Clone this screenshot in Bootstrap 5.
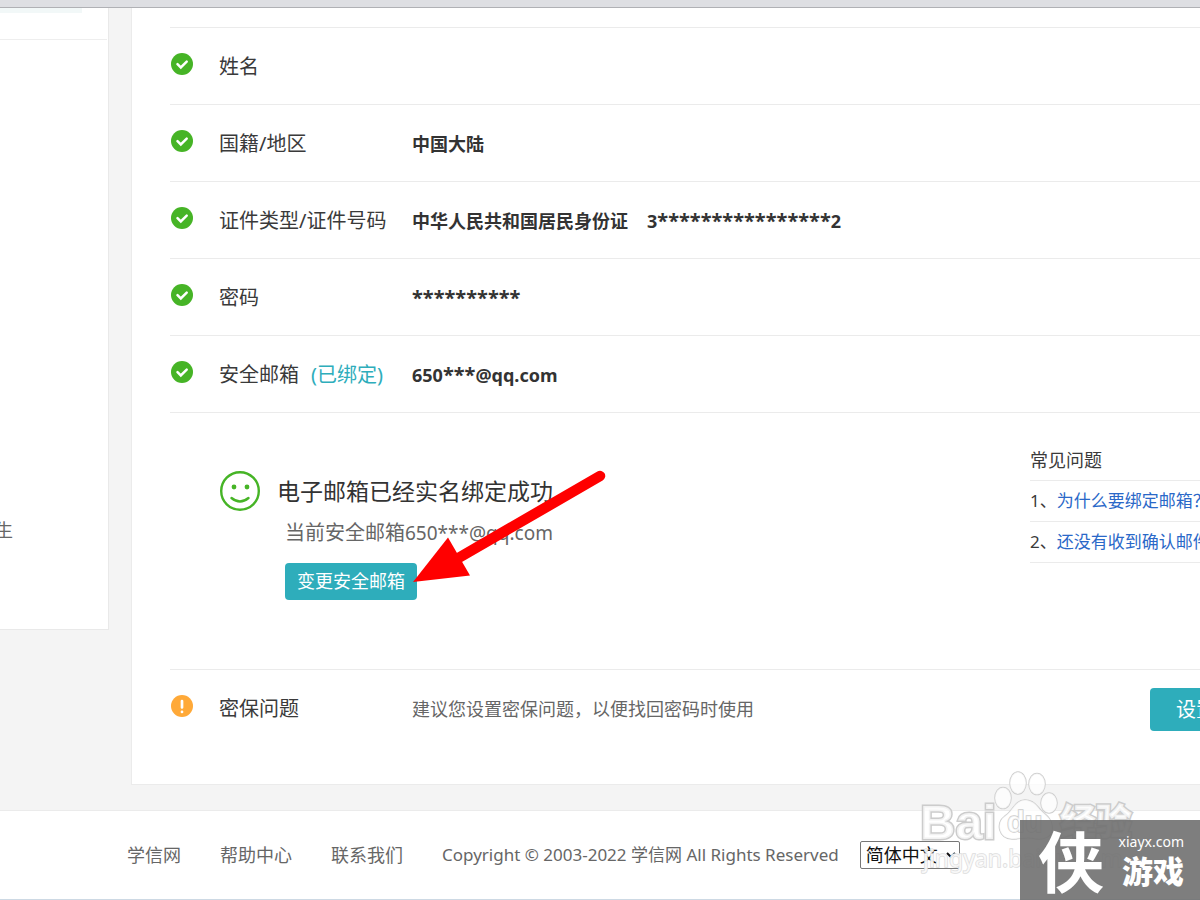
<!DOCTYPE html>
<html lang="zh-CN">
<head>
<meta charset="utf-8">
<meta name="viewport" content="width=device-width, initial-scale=1">
<title>学信网 账号安全</title>
<link href="https://cdn.jsdelivr.net/npm/bootstrap@5.3.0/dist/css/bootstrap.min.css" rel="stylesheet">
<style>
  body { font: 18px/24px "Noto Sans", "Noto Sans CJK SC", sans-serif; color: #3a3a3a; background: #f4f4f4; overflow-x: hidden; }
  a { text-decoration: none; color: #2a68c8; }
  .topbar { height: 8px; background: #dedfe3; border-bottom: 1px solid #b0b1b5; }
  .side { width: 109px; height: 622px; background: #fff; border: 1px solid #e9e9e9; border-width: 0 1px 1px 0; overflow: hidden; }
  .side-active { width: 82px; height: 5px; background: #f2f8f8; }
  .side-rule { height: 27px; width: 107px; border-bottom: 1px solid #eee; }
  .side-text { margin-top: 478px; margin-left: -5px; color: #666; }
  .panel { min-width: 0; margin-left: 22px; padding: 19px 0 38px 38px; background: #fff; border: 1px solid #ebebeb; border-width: 0 0 1px 1px; overflow: hidden; }
  .item { height: 77px; border-top: 1px solid #ebebeb; padding: 2px 0 0 1px; }
  .mark-icon { width: 22px; height: 22px; margin-bottom: 7px; }
  .item-label { width: 193px; margin-left: 26px; font-size: 20px; }
  .teal-text { color: #2eadbb; margin-left: 12px; }
  .item-value { font-weight: 700; color: #333; }
  .stars { font-size: 20px; }
  .id-number { margin-left: 19px; }
  .bound { height: 257px; border-top: 1px solid #ebebeb; padding: 27px 0 0 49px; }
  .bound-body { padding-top: 31px; }
  .bound-title { font-size: 23px; line-height: 32px; color: #333; }
  .bound-sub { font-size: 20px; line-height: 28px; color: #666; margin: 12px 0 16px 8px; }
  .bound-mail { font-size: 19px; }
  .btn-teal { --bs-btn-bg: #2eadbb; --bs-btn-color: #fff; --bs-btn-hover-bg: #2698a5; --bs-btn-hover-color: #fff; --bs-btn-border-width: 0; --bs-btn-border-radius: 4px; }
  .btn-change { font-size: 18px; line-height: 25px; padding: 6px 12px; margin-left: 8px; }
  .btn-set { font-size: 20px; line-height: 27px; padding: 8px 26px; margin-right: -42px; }
  .faq { width: 170px; white-space: nowrap; overflow: hidden; font-size: 17px; }
  .faq > * { line-height: 24px; height: 41px; padding-top: 8px; border-bottom: 1px solid #ebebeb; }
  .faq-head { font-size: 18px; }
  .tip { color: #666; }
  .foot { height: 90px; margin-top: 25px; padding-left: 127px; background: #fff; border-top: 1px solid #ebebeb; border-bottom: 1px solid #cdd9e4; color: #666; gap: 39px; }
  .foot a { color: #666; }
  .copyright { font-size: 17px; }
  .lang { width: 100px; height: 28px; margin-left: -18px; padding: 0 0 0 1px; font-size: 18px; border: 1px solid #767676; border-radius: 2px; background: #fff; color: #111; }
  .arrow { left: 408px; top: 464px; pointer-events: none; }
  .wm { right: 0; bottom: 0; pointer-events: none; }
  .brand { right: 0; bottom: 0; width: 180px; height: 80px; background: rgba(112,112,112,.9); color: #fff; }
  .brand-char { font: 700 66px/76px "Noto Sans CJK SC", sans-serif; left: 18px; top: 0; }
  .brand-url { font: 14px/20px "Noto Sans", sans-serif; }
  .brand-name { font: 900 31px/36px "Noto Sans CJK SC", sans-serif; }
</style>
</head>
<body>
<div class="position-relative overflow-hidden">
  <svg width="0" height="0" class="position-absolute" aria-hidden="true">
    <symbol id="ok" viewBox="0 0 22 22"><circle cx="11" cy="11" r="11" fill="#46b426"/><path d="M6.500 11.200 9.800 14.400 15.700 8.700" fill="none" stroke="#fff" stroke-width="2.500" stroke-linecap="round"/></symbol>
    <symbol id="warn" viewBox="0 0 22 22"><circle cx="11" cy="11" r="11" fill="#ffa938"/><path d="M11 6v6.500M11 16.800v.2" fill="none" stroke="#fff" stroke-width="2.700" stroke-linecap="round"/></symbol>
  </svg>
  <header class="topbar"></header>
  <div class="d-flex align-items-start">
    <aside class="side flex-shrink-0">
      <div class="side-active"></div>
      <div class="side-rule"></div>
      <div class="side-text">生</div>
    </aside>
    <main class="panel flex-fill">
      <div class="item d-flex align-items-center"><svg class="mark-icon"><use href="#ok"/></svg><div class="item-label">姓名</div></div>
      <div class="item d-flex align-items-center"><svg class="mark-icon"><use href="#ok"/></svg><div class="item-label">国籍/地区</div><div class="item-value">中国大陆</div></div>
      <div class="item d-flex align-items-center"><svg class="mark-icon"><use href="#ok"/></svg><div class="item-label">证件类型/证件号码</div><div class="item-value">中华人民共和国居民身份证<span class="id-number">3<span class="stars">****************</span>2</span></div></div>
      <div class="item d-flex align-items-center"><svg class="mark-icon"><use href="#ok"/></svg><div class="item-label">密码</div><div class="item-value stars">**********</div></div>
      <div class="item d-flex align-items-center"><svg class="mark-icon"><use href="#ok"/></svg><div class="item-label">安全邮箱<span class="teal-text">(已绑定)</span></div><div class="item-value">650<span class="stars">***</span>@qq.com</div></div>
      <section class="bound d-flex justify-content-between">
        <div class="bound-body d-flex align-items-start">
          <svg width="42" height="42" viewBox="0 -1 42 42" fill="none" stroke="#46b426" stroke-width="2.400"><circle cx="21" cy="19" r="18.800"/><circle cx="15" cy="15" r="2.400" fill="#46b426" stroke="none"/><circle cx="28" cy="15" r="2.400" fill="#46b426" stroke="none"/><path d="M12.500 26Q21 33 29.500 26" stroke-linecap="round"/></svg>
          <div class="ms-3 pt-1">
            <div class="bound-title">电子邮箱已经实名绑定成功</div>
            <div class="bound-sub">当前安全邮箱<span class="bound-mail">650***@qq.com</span></div>
            <button type="button" class="btn btn-teal btn-change">变更安全邮箱</button>
          </div>
        </div>
        <div class="faq">
          <div class="faq-head">常见问题</div>
          <div>1、<a href="#">为什么要绑定邮箱？</a></div>
          <div>2、<a href="#">还没有收到确认邮件？</a></div>
        </div>
      </section>
      <div class="item d-flex align-items-center"><svg class="mark-icon"><use href="#warn"/></svg><div class="item-label">密保问题</div><div class="tip flex-fill">建议您设置密保问题，以便找回密码时使用</div><button type="button" class="btn btn-teal btn-set flex-shrink-0">设置</button></div>
    </main>
  </div>
  <footer class="foot d-flex align-items-center text-nowrap">
    <a href="#">学信网</a><a href="#">帮助中心</a><a href="#">联系我们</a>
    <span class="copyright">Copyright © 2003-2022 学信网 All Rights Reserved</span>
    <select class="lang" aria-label="语言"><option>简体中文</option></select>
  </footer>

  <svg class="arrow position-absolute" width="202" height="126" viewBox="408 464 202 126" aria-hidden="true"><path d="M600 476 455 560" stroke="#f00" stroke-width="10.500" stroke-linecap="round"/><path d="M413 582 448 537.500 470 575.500Z" fill="#f00"/></svg>
  <svg class="wm position-absolute" width="282" height="132" viewBox="918 768 282 132" aria-hidden="true">
    <g fill="#fff" fill-opacity=".75" stroke="#ccc" stroke-width="1.500" paint-order="stroke">
      <ellipse cx="1018" cy="783" rx="8" ry="11"/><ellipse cx="1037" cy="784" rx="8" ry="10.500"/><ellipse cx="1003" cy="798" rx="8" ry="10.500"/><ellipse cx="1049" cy="803" rx="8" ry="10"/>
      <path d="M1025 800C1015 800 1013 811 1005 816 995 823 999 839 1012 839 1020 839 1024 837 1032 838 1045 841 1053 836 1052 826 1051 816 1043 814 1038 807 1034 802 1030 800 1025 800Z"/>
      <g font-family="Liberation Sans" font-weight="700"><text x="920" y="839" font-size="49" stroke-width="3">Bai</text><text x="1007" y="832" font-size="29">du</text></g>
      <text x="1060" y="835" font-family="Noto Sans CJK SC" font-weight="900" font-size="36" stroke-width="3">经验</text>
      <text x="923" y="867" font-family="Noto Sans" font-size="23" stroke="#ddd">jingyan.baidu.com</text>
    </g>
  </svg>
  <div class="brand position-absolute">
    <div class="brand-char position-absolute">侠</div>
    <div class="d-flex flex-column align-items-end pe-3 pt-2 mt-1">
      <span class="brand-url">xiayx.com</span><span class="brand-name">游戏</span>
    </div>
  </div>
</div>
<script src="https://cdn.jsdelivr.net/npm/bootstrap@5.3.0/dist/js/bootstrap.bundle.min.js"></script>
</body>
</html>
